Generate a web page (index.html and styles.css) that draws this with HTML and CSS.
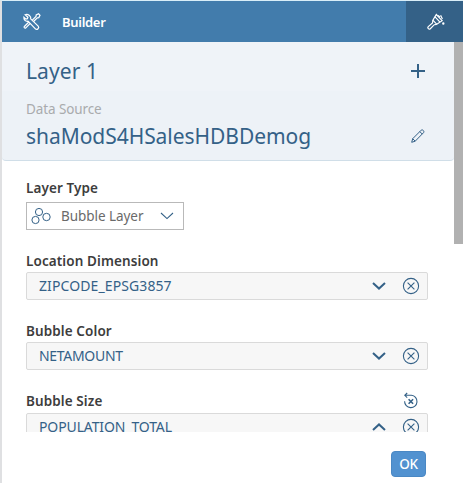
FILE: index.html
```html
<!DOCTYPE html>
<html lang="en">
<head>
<meta charset="utf-8">
<title>Builder</title>
<link rel="stylesheet" href="styles.css">
</head>
<body>
<svg width="0" height="0" class="defs">
  <symbol id="down" viewBox="0 0 14 8"><path d="M1 1l6 5.600L13 1"/></symbol>
  <symbol id="clear" viewBox="0 0 18 18"><circle cx="9" cy="9" r="7.600"/><path d="M5.600 5.600l6.800 6.800M12.400 5.600l-6.800 6.800"/></symbol>
</svg>
<main class="panel">
  <header class="bar">
    <svg class="tools" viewBox="0 0 18 18"><path d="M2.200 1.700l2.700 2.500-.5 1.500-1.500.4L.9 4.200c-.3 2.500 1.600 4.500 4.100 4L12.400 15.900c1.600 1.600 4.400-1 2.800-2.800L7.700 5.900C8.400 3.500 5.300.7 2.200 1.700z"/><path d="M9.300 7.200l3.700-3.700.2-1.500L15.600.8l1.400 1.500-1.200 2.300-1.500.2-3.700 3.700M7.300 10.300l-4.500 4.500c-.8 1-2.300-.4-1.400-1.300l4.400-4.500"/></svg>
    <h1 class="title">Builder</h1>
    <div class="style-tab">
      <svg class="brush" viewBox="0 0 18 18"><path d="M9.300 1.500l5.800 6.200-5.300 3.600-3.900-4.100z"/><path d="M7.800 3.700l5.200 5.400M5.900 7.200L5.500 10l-4.200 3.600c-1.300 1.400.7 3.300 2 2.100l4-4 2.500-.4M11.200 2.300l1.800 1.900M13.600 2.200l1.800 3.700"/><circle cx="16.300" cy="10.500" r=".6"/></svg>
    </div>
  </header>
  <div class="content">
    <div class="scroll">
      <section class="row layer">
        <h2 class="big layer-name">Layer 1</h2>
        <svg class="plus" viewBox="0 0 14 14"><path d="M7 0v14M0 7h14"/></svg>
      </section>
      <section class="source">
        <div class="caption">Data Source</div>
        <div class="row source-row">
          <div class="big model">shaModS4HSalesHDBDemog</div>
          <svg class="pencil" viewBox="0 0 14 14"><path d="M.7 13.300l1-3.600L10.200 1.200c1.200-1.200 3.500 1 2.400 2.400L4.200 12.200zM1.700 9.700l2.500 2.500M8.800 2.600l2.500 2.500"/></svg>
        </div>
      </section>
      <section class="form">
        <div class="label type">Layer Type</div>
        <div class="select">
          <svg class="bubbles" viewBox="0 0 20 18"><circle cx="8" cy="5" r="3.600"/><circle cx="4.500" cy="13" r="3.600"/><circle cx="15.500" cy="10" r="3.700"/></svg>
          <span class="select-text">Bubble Layer</span>
          <svg class="thin-arrow"><use href="#down"/></svg>
        </div>
        <div class="label location">Location Dimension</div>
        <div class="field"><span class="zip">ZIPCODE_EPSG3857</span><svg class="arrow"><use href="#down"/></svg><svg class="clear"><use href="#clear"/></svg></div>
        <div class="label color">Bubble Color</div>
        <div class="field"><span class="net">NETAMOUNT</span><svg class="arrow"><use href="#down"/></svg><svg class="clear"><use href="#clear"/></svg></div>
        <div class="label size"><span>Bubble Size</span>
          <svg class="reset" viewBox="0 0 16 18"><path d="M2.200 3.300h6.200a6.200 6.200 0 1 1-6.800 6M4.200 1L1.800 3.300l2.400 2.400"/><path class="cross" d="M5.600 7.200l4.500 4.500M10.100 7.200l-4.500 4.500"/></svg>
        </div>
        <div class="field last"><span class="pop">POPULATION_TOTAL</span><svg class="arrow up"><use href="#down"/></svg><svg class="clear"><use href="#clear"/></svg></div>
      </section>
    </div>
    <div class="track"><div class="thumb"></div></div>
  </div>
  <footer class="footer"><button class="ok">OK</button></footer>
</main>
</body>
</html>
```

FILE: styles.css
```css
* { box-sizing: border-box; }
body { margin: 0; height: 483px; overflow: hidden; background: #fff; font-family: "Noto Sans", "Open Sans", sans-serif; }
svg { display: block; flex: none; fill: none; stroke: #346187; }
.defs { position: absolute; }
h1, h2 { margin: 0; font-weight: 400; }
.panel { height: 483px; border-left: 2px solid #dfe0e2; border-top: 1px solid #d9eef8; display: flex; flex-direction: column; }
.bar { height: 41px; flex: none; display: flex; align-items: center; background: #427cac; padding-left: 21px; }
.bar svg { stroke: #fff; stroke-width: 1.2; }
.tools { width: 18px; height: 18px; }
.title { flex: 1; margin-left: 21px; color: #fff; font-size: 13px; line-height: 18px; font-weight: 600; letter-spacing: -.3px; }
.style-tab { width: 57px; height: 41px; background: #346187; padding: 12px 0 0 21px; }
.brush { width: 18px; height: 18px; }
.content { height: 390px; flex: none; display: flex; overflow: hidden; }
.scroll { width: 452px; height: 390px; overflow: hidden; }
.track { width: 9px; }
.thumb { height: 202px; background: #b1b1b1; }
.row { display: flex; align-items: center; justify-content: space-between; }
.big { color: #346187; font-size: 21px; line-height: 30px; white-space: nowrap; }
.layer { height: 49px; padding: 9px 29px 0 24px; background: #eff3f8; }
.layer-name { letter-spacing: .1px; margin-top: -1px; }
.plus { width: 14px; height: 14px; stroke-width: 2; }
.source { height: 70px; padding: 9px 29px 0 24px; background: #edf2f7; border-bottom: 1px solid #d0dee8; border-radius: 0 0 4px 4px; }
.source-row { margin-top: 3px; }
.model { letter-spacing: -.05px; }
.caption { color: #a9abad; font-size: 13.5px; line-height: 18px; letter-spacing: -.1px; }
.pencil { width: 14px; height: 14px; }
.form { padding: 18px 26px 0 24px; }
.label { color: #3d3d3d; font-size: 13.5px; line-height: 18px; height: 18px; font-weight: 600; letter-spacing: .1px; white-space: nowrap; }
.select { width: 158px; height: 28px; margin-top: 5px; border: 1px solid #b9b9b9; display: flex; align-items: center; padding-left: 4px; color: #6a6a6a; font-size: 13.5px; letter-spacing: -.05px; }
.bubbles { width: 20px; height: 18px; }
.select-text { width: 99px; margin-left: 10px; white-space: nowrap; }
.thin-arrow { width: 14px; height: 8px; stroke-width: 1.1; }
.location { margin-top: 22px; }
.field { height: 28px; margin-top: 2px; border: 1px solid #dadada; border-radius: 2px; background: #f7f7f7; display: flex; align-items: center; padding: 0 7px 0 12px; color: #346187; font-size: 14px; line-height: 18px; }
.field span { flex: 1; white-space: nowrap; }
.zip { letter-spacing: .1px; }
.net { letter-spacing: -.3px; }
.pop { letter-spacing: -.12px; }
.last { margin-top: 3px; }
.arrow { width: 14px; height: 8px; stroke-width: 2; margin-right: 16px; }
.clear { width: 18px; height: 18px; stroke-width: 1.1; }
.up { transform: rotate(180deg); }
.color, .size { margin-top: 22px; }
.size { display: flex; justify-content: space-between; padding-right: 9px; }
.reset { width: 16px; height: 18px; stroke-width: 1.1; }
.cross { stroke-width: 1.6; }
.footer { display: flex; justify-content: flex-end; padding: 19px 37px 0 0; }
.ok { width: 35px; height: 26px; border: 1px solid #4a88c4; border-radius: 4px; background: #5292d0; color: #fff; font: 500 13.5px/18px "Noto Sans", sans-serif; letter-spacing: -.3px; padding: 0; }
```
